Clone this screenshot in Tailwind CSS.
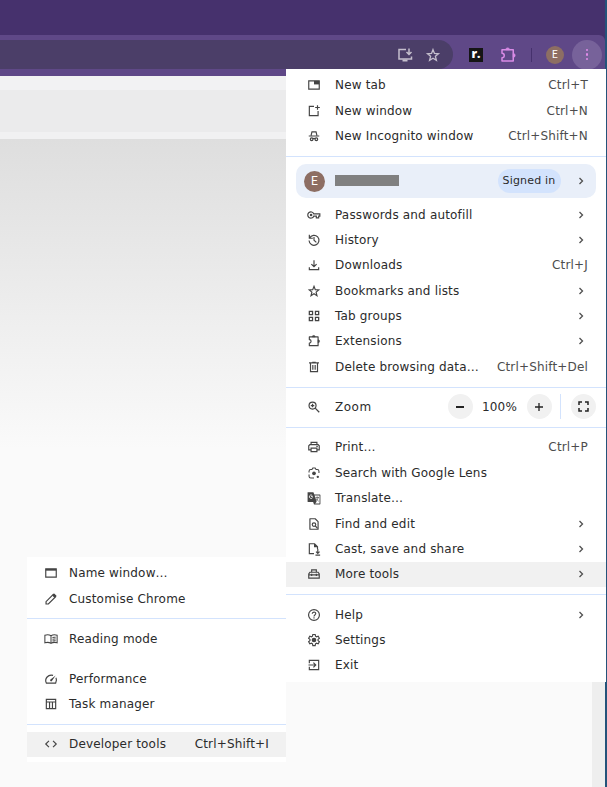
<!DOCTYPE html>
<html lang="en">
<head>
<meta charset="utf-8">
<title>Browser menu</title>
<script src="https://cdn.jsdelivr.net/npm/@tailwindcss/browser@4"></script>
</head>
<body class="relative h-[787px] w-[607px] overflow-hidden bg-[#fafafa] font-['DejaVu_Sans',sans-serif] text-[12px] tracking-[0.17px] text-[#2b2b2b]">
<svg class="hidden">
  <symbol id="tab" viewBox="0 0 24 24"><path d="M3 5h18v14H3z" fill="none" stroke="currentColor" stroke-width="2"/><path d="M12 5h9v6h-9z" fill="currentColor"/></symbol>
  <symbol id="newwin" viewBox="0 0 24 24"><path d="M12 4H4v16h15v-8M18 2v8M14 6h8" fill="none" stroke="currentColor" stroke-width="2"/></symbol>
  <symbol id="incog" viewBox="0 0 24 24"><path d="M3 12h18M7 11l1.500-6h7l1.500 6M10 17c1-1 3-1 4 0" fill="none" stroke="currentColor" stroke-width="2"/><circle cx="8" cy="17.500" r="2.300" fill="none" stroke="currentColor" stroke-width="2"/><circle cx="16" cy="17.500" r="2.300" fill="none" stroke="currentColor" stroke-width="2"/></symbol>
  <symbol id="key" viewBox="0 0 24 24"><path d="M11.500 10H22v4h-2v3h-4v-3h-4.500A5.300 5.300 0 1 1 11.500 10z" fill="none" stroke="currentColor" stroke-width="2"/><circle cx="7" cy="12" r="2.200" fill="currentColor"/></symbol>
  <symbol id="hist" viewBox="0 0 24 24"><path d="M4 3v6h6M4.500 8.500A8.500 8.500 0 1 1 3.500 13M12 7v5.500l4 3.500" fill="none" stroke="currentColor" stroke-width="2"/></symbol>
  <symbol id="down" viewBox="0 0 24 24"><path d="M12 4v11M7.500 10.500L12 15l4.500-4.500M4 16v4h16v-4" fill="none" stroke="currentColor" stroke-width="2"/></symbol>
  <symbol id="star" viewBox="0 0 24 24"><path d="M12 4l2.200 5.600 6 .5-4.600 3.900 1.500 6-5.100-3.200L6.900 20l1.500-6-4.600-3.900 6-.5z" fill="none" stroke="currentColor" stroke-width="2"/></symbol>
  <symbol id="grid" viewBox="0 0 24 24"><path d="M4 4h5.500v5.500H4zM14.500 4H20v5.500h-5.500zM4 14.500h5.500V20H4zM14.500 14.500H20V20h-5.500z" fill="none" stroke="currentColor" stroke-width="2.200"/></symbol>
  <symbol id="ext" viewBox="0 0 24 24"><path d="M4 5h15v15H4v-4.500c4 0 4-6 0-6z" fill="none" stroke="currentColor" stroke-width="2" stroke-linejoin="round"/><path d="M9 5a2.500 2.500 0 0 1 5 0zM19 10a2.500 2.500 0 0 1 0 5z" fill="currentColor" stroke="currentColor"/></symbol>
  <symbol id="trash" viewBox="0 0 24 24"><path d="M3.500 5h17M9 4h6M6 5v15h12V5M10 8.500v8M14 8.500v8" fill="none" stroke="currentColor" stroke-width="2"/></symbol>
  <symbol id="zoomin" viewBox="0 0 24 24"><circle cx="9.500" cy="9.500" r="6" fill="none" stroke="currentColor" stroke-width="2"/><path d="M14 14l7 7M6.500 9.500h6M9.500 6.500v6" fill="none" stroke="currentColor" stroke-width="2.200"/></symbol>
  <symbol id="print" viewBox="0 0 24 24"><path d="M7 8V4h10v4M7 17H3v-7l2-2h14l2 2v7h-4M7 14h10v6H7z" fill="none" stroke="currentColor" stroke-width="2"/><path d="M16 10h2.500v2H16z" fill="currentColor"/></symbol>
  <symbol id="lens" viewBox="0 0 24 24"><path d="M3.500 11V9q0-3 3-3h2L10 3.500h4L15.500 6h2q3 0 3 3v3M3.500 14.500v3q0 3 3 3H12" fill="none" stroke="currentColor" stroke-width="1.800"/><circle cx="12" cy="12.500" r="3.200" fill="currentColor"/><circle cx="18.500" cy="18.500" r="2" fill="currentColor"/></symbol>
  <symbol id="trans" viewBox="0 0 24 24"><path d="M1 2h10l1.500 4H22q1 0 1 1v15q0 1-1 1H12l-1.500-4H2q-1 0-1-1z" fill="currentColor"/><path d="M13 7.500h8.500v14H14l2.500-3z" fill="#fff"/><path d="M10 9.500H6.800M9 7.500a3 3 0 1 0 .8 3.500" fill="none" stroke="#fff" stroke-width="1.400"/><path d="M14.500 11h6M17.500 9.500V11M19.500 11q-1 4-4.500 5.500M15.500 12.500q1.500 3 4.500 5" fill="none" stroke="currentColor" stroke-width="1.200"/></symbol>
  <symbol id="find" viewBox="0 0 24 24"><path d="M14 3H5v18h14V8z" fill="none" stroke="currentColor" stroke-width="2" stroke-linejoin="round"/><circle cx="12" cy="13" r="3" fill="none" stroke="currentColor" stroke-width="2"/><path d="M14 15l4 4.500" stroke="currentColor" stroke-width="2"/></symbol>
  <symbol id="cast" viewBox="0 0 24 24"><path d="M12 20H4V3h9l5 5v4M13 3v5h5M18.500 12v7M15.500 16.500l3 3 3-3M14.500 22.500h8" fill="none" stroke="currentColor" stroke-width="2"/></symbol>
  <symbol id="tools" viewBox="0 0 24 24"><path d="M8 9V5h8v4M3 19v-7l2-3h14l2 3v7zM3 13.500h18M8 11.500v4M16 11.500v4" fill="none" stroke="currentColor" stroke-width="2"/></symbol>
  <symbol id="help" viewBox="0 0 24 24"><circle cx="12" cy="12" r="9.300" fill="none" stroke="currentColor" stroke-width="2"/><path d="M9 10c0-4 6-4 6-.5 0 2-3 2.500-3 5M12 16v2.200" fill="none" stroke="currentColor" stroke-width="2"/></symbol>
  <symbol id="gear" viewBox="0 0 24 24"><path d="M10 2.500h4l.6 3 1.700 1 2.900-1 2 3.500-2.300 2v2l2.300 2-2 3.500-2.900-1-1.700 1-.6 3h-4l-.6-3-1.700-1-2.900 1-2-3.500 2.300-2v-2l-2.300-2 2-3.500 2.900 1 1.700-1z" fill="none" stroke="currentColor" stroke-width="2"/><circle cx="12" cy="12" r="4" fill="currentColor"/></symbol>
  <symbol id="exit" viewBox="0 0 24 24"><path d="M4 9V4h16v16H4v-5M2.500 12H15M11 8l4 4-4 4" fill="none" stroke="currentColor" stroke-width="2"/></symbol>
  <symbol id="window" viewBox="0 0 24 24"><path d="M3 5h18v14H3z" fill="none" stroke="currentColor" stroke-width="2"/><path d="M3 5h18v3H3z" fill="currentColor"/></symbol>
  <symbol id="pencil" viewBox="0 0 24 24"><path d="M3.500 20.500v-4L16 4l4 4L7.500 20.500z" fill="none" stroke="currentColor" stroke-width="2"/><path d="M14 6l3.500-3.500 4 4L18 10z" fill="currentColor"/></symbol>
  <symbol id="book" viewBox="0 0 24 24"><path d="M12 6.500C9 4.500 5 4.500 1.500 5.500v13c3.500-1 7.500-1 10.500 1 3-2 7-2 10.500-1v-13C19 4.500 15 4.500 12 6.500zv13M14.500 9.500q3-1 5.500-.5M14.500 12.500q3-1 5.500-.5M14.500 15.500q3-1 5.500-.5" fill="none" stroke="currentColor" stroke-width="1.800"/></symbol>
  <symbol id="perf" viewBox="0 0 24 24"><path d="M15.500 5.800A9.500 9.500 0 0 0 4 19h16a9.500 9.500 0 0 0 .5-9" fill="none" stroke="currentColor" stroke-width="2"/><path d="M20 6l-6.500 9.500a1.700 1.700 0 0 1-2.500-2.500z" fill="currentColor"/></symbol>
  <symbol id="task" viewBox="0 0 24 24"><path d="M4 4h16v16H4zM4 8.500h16M9.500 8.500V20M14.500 8.500V20" fill="none" stroke="currentColor" stroke-width="2"/></symbol>
  <symbol id="code" viewBox="0 0 24 24"><path d="M8.500 6.500L3 12l5.500 5.500M15.500 6.500L21 12l-5.500 5.500" fill="none" stroke="currentColor" stroke-width="2"/></symbol>
  <symbol id="chev" viewBox="0 0 8 8"><path d="M2.500 1L5.500 4l-3 3" fill="none" stroke="currentColor" stroke-width="1.300"/></symbol>
</svg>

<header class="h-[76px] bg-[#46316d] pt-[35px]">
  <div class="flex h-[41px] w-[605px] items-center rounded-tr-md bg-[#5f4887] pb-[2px]">
    <div class="flex h-[29px] w-[453px] items-center justify-end gap-3 rounded-r-full bg-[#4b3e68] pr-[12px] text-[#c5bfcd]">
      <svg class="size-4" viewBox="0 0 16 16" fill="none" stroke="currentColor" stroke-width="1.500"><path d="M9 2.500H2v9.500h12.500V9.500M12 1.500v6M9.500 5L12 7.500 14.500 5"/><path d="M5.500 13.500h5" stroke-width="2"/></svg>
      <svg class="size-4"><use href="#star"/></svg>
    </div>
    <div class="ml-4 flex size-[14px] items-center justify-center bg-[#151515] font-['Open_Sans',sans-serif] text-[12px] leading-none font-extrabold tracking-normal text-white"><span class="-mt-[2px]">r.</span></div>
    <svg class="ml-4 size-[18px] text-[#d98be6]"><use href="#ext"/></svg>
    <div class="ml-[14px] h-[14px] w-px bg-[#46316d]"></div>
    <div class="ml-[14px] flex size-[18px] items-center justify-center rounded-full bg-[#8d6e63] font-['Roboto',sans-serif] text-[10px] text-white">E</div>
    <div class="ml-2 flex size-[30px] flex-col items-center justify-center gap-[2px] rounded-full bg-[#77629a]">
      <i class="size-[2.600px] rounded-full bg-[#e18be9]"></i><i class="size-[2.600px] rounded-full bg-[#e18be9]"></i><i class="size-[2.600px] rounded-full bg-[#e18be9]"></i>
    </div>
  </div>
</header>
<main class="h-[711px]">
  <div class="h-[14px] bg-[#f2f2f3]"></div>
  <div class="h-[42px] bg-[#ebebec]"></div>
  <div class="h-[7px] bg-[#f1f1f2]"></div>
  <div class="h-[310px] bg-linear-to-b from-[#dedede] to-[#fafafa]"></div>
</main>
<div class="absolute top-[682px] right-[2px] h-[105px] w-[13px] bg-[#eeeeee]"></div>
<div class="absolute top-0 right-0 h-[787px] w-[2px] bg-[#24537a]"></div>

<nav id="menu" class="absolute top-[69px] left-[286px] flex h-[613px] w-[320px] flex-col bg-white pt-[3.700px]"></nav>
<nav id="submenu" class="absolute top-[557px] left-[27px] flex h-[205px] w-[259px] flex-col bg-white pt-[3.700px]"></nav>

<script>
const icon = n => `<svg class="size-[14px] shrink-0 text-[#444]"><use href="#${n}"/></svg>`;
const chev = `<svg class="mr-[3px] size-2 text-[#505050]"><use href="#chev"/></svg>`;
const row = (i, label, end = '', active = false) =>
  `<div class="flex h-[25.35px] shrink-0 items-center pr-[18px] pl-[21px] whitespace-nowrap ${active ? 'bg-[#f1f1f1]' : ''}">
    ${icon(i)}<span class="ml-[14px]">${label}</span><span class="ml-auto text-[#4d4d4d]">${end === '>' ? chev : end}</span></div>`;
const subrow = (i, label, end = '', active = false) =>
  `<div class="flex h-[25.35px] shrink-0 items-center pr-[17px] pl-[17px] whitespace-nowrap ${active ? 'bg-[#f1f1f1]' : ''}">
    ${icon(i)}<span class="ml-[11px]">${label}</span><span class="ml-auto">${end}</span></div>`;
const line = `<div class="my-[7px] h-px shrink-0 bg-[#d3e3fd]"></div>`;

document.getElementById('menu').innerHTML =
  row('tab', 'New tab', 'Ctrl+T') + row('newwin', 'New window', 'Ctrl+N') + row('incog', 'New Incognito window', 'Ctrl+Shift+N') +
  `<div class="mt-[7.300px] mb-[7px] h-px shrink-0 bg-[#d3e3fd]"></div>
  <div class="mr-[10px] mb-[4px] ml-[10px] flex h-[34px] shrink-0 items-center rounded-[10px] bg-[#e9eff9] pr-[8px] pl-2">
    <div class="flex size-[21px] items-center justify-center rounded-full bg-[#8d6e63] font-['Roboto',sans-serif] text-[12px] text-white">E</div>
    <div class="mb-px ml-[10px] h-[11px] w-[64px] bg-[#808080]"></div>
    <div class="mr-[16.500px] ml-auto flex h-6 w-[63px] items-center justify-center rounded-full bg-[#d3e3fd] text-[11px]">Signed in</div>
    ${chev}
  </div>` +
  row('key', 'Passwords and autofill', '>') + row('hist', 'History', '>') + row('down', 'Downloads', 'Ctrl+J') +
  row('star', 'Bookmarks and lists', '>') + row('grid', 'Tab groups', '>') + row('ext', 'Extensions', '>') +
  row('trash', 'Delete browsing data…', 'Ctrl+Shift+Del') +
  `<div class="mt-[7.300px] mb-[6.700px] h-px shrink-0 bg-[#d3e3fd]"></div>
  <div class="flex h-[25px] shrink-0 items-center pl-[21px]">${icon('zoomin')}<span class="ml-[14px] tracking-[0.5px]">Zoom</span>
    <div class="ml-auto flex size-[25px] items-center justify-center rounded-full bg-[#f1f1f1]"><i class="h-[1.300px] w-2 bg-[#222]"></i></div>
    <span class="w-[54px] text-center">100%</span>
    <div class="flex size-[25px] items-center justify-center rounded-full bg-[#f1f1f1]"><svg class="size-2" viewBox="0 0 8 8"><path d="M0 4h8M4 0v8" stroke="#222" stroke-width="1.300"/></svg></div>
    <div class="ml-[8px] h-[25px] w-px bg-[#d3e3fd]"></div>
    <div class="mr-[10.500px] ml-[10px] flex size-[25px] items-center justify-center rounded-full bg-[#f1f1f1]"><svg class="size-[11px]" viewBox="0 0 11 11"><path d="M1 4V1h3M7 1h3v3M10 7v3H7M4 10H1V7" fill="none" stroke="#222" stroke-width="1.500"/></svg></div>
  </div>
  <div class="mt-[7.400px] mb-[7px] h-px shrink-0 bg-[#d3e3fd]"></div>` +
  row('print', 'Print…', 'Ctrl+P') + row('lens', 'Search with Google Lens') + row('trans', 'Translate…') +
  row('find', 'Find and edit', '>') + row('cast', 'Cast, save and share', '>') + row('tools', 'More tools', '>', true) +
  `<div class="my-[7px] h-px shrink-0 bg-[#d3e3fd]"></div>` +
  row('help', 'Help', '>') + row('gear', 'Settings') + row('exit', 'Exit');

document.getElementById('submenu').innerHTML =
  subrow('window', 'Name window…') + subrow('pencil', 'Customise Chrome') + line +
  subrow('book', 'Reading mode') + `<div class="h-[14.300px] shrink-0"></div>` +
  subrow('perf', 'Performance') + subrow('task', 'Task manager') + line +
  subrow('code', 'Developer tools', 'Ctrl+Shift+I', true);
</script>
</body>
</html>
